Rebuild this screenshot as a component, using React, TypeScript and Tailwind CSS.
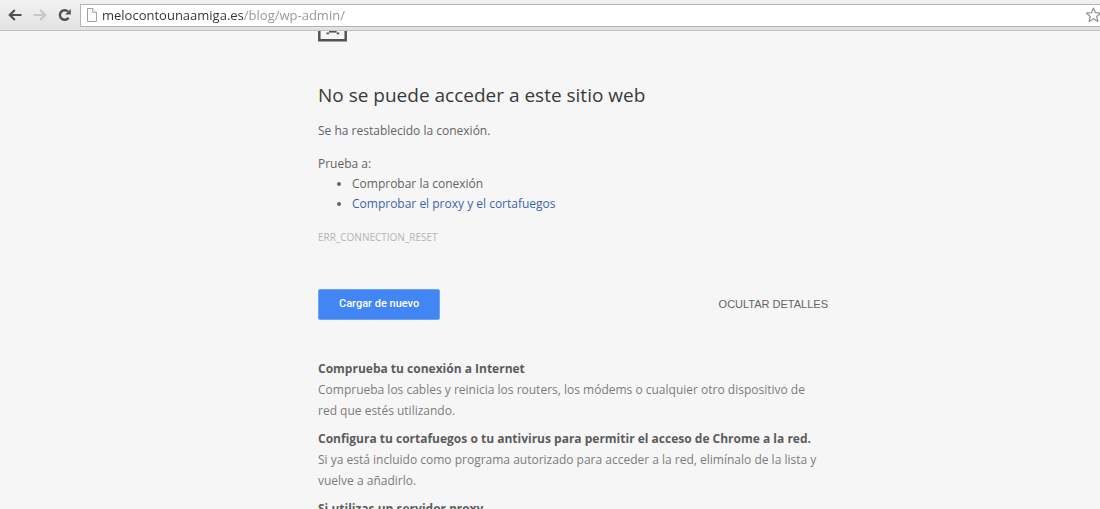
const suggestions = [
  {
    title: "Comprueba tu conexión a Internet",
    body: "Comprueba los cables y reinicia los routers, los módems o cualquier otro dispositivo de red que estés utilizando.",
  },
  {
    title: "Configura tu cortafuegos o tu antivirus para permitir el acceso de Chrome a la red.",
    body: "Si ya está incluido como programa autorizado para acceder a la red, elimínalo de la lista y vuelve a añadirlo.",
  },
  { title: "Si utilizas un servidor proxy", body: "" },
];

export default function App() {
  return (
    <div className="flex h-screen flex-col overflow-hidden bg-[#f6f6f6] font-['Open_Sans','Noto_Sans',sans-serif] text-[#646464]">
      <Toolbar />
      <main className="min-h-0 flex-1 overflow-hidden pl-[46px]">
        <div className="mx-auto max-w-[510px]">
          <SadPage />

          <h1 className="mt-10 text-[19px] leading-[26px] text-[#3a3a3a]">No se puede acceder a este sitio web</h1>
          <p className="mt-[13px] text-xs leading-5">Se ha restablecido la conexión.</p>

          <div className="mt-[13px] text-xs leading-5">
            <p>Prueba a:</p>
            <ul className="list-disc pl-[34px]">
              <li>Comprobar la conexión</li>
              <li>
                <a href="#detalles" className="text-[#3c64ad]">Comprobar el proxy y el cortafuegos</a>
              </li>
            </ul>
          </div>

          <p className="mt-[15px] text-[10px] leading-4 text-[#b4b4b4]">ERR_CONNECTION_RESET</p>

          <div className="mt-11 flex items-center justify-between text-[11px]">
            <button type="button" className="h-[31px] rounded-xs border border-[#6ea3f8] bg-[#4285f4] px-5 font-['Roboto',sans-serif] font-medium text-white">
              Cargar de nuevo
            </button>
            <button type="button" className="font-['Liberation_Sans',sans-serif] uppercase">Ocultar detalles</button>
          </div>

          <section id="detalles" className="mt-[38px] space-y-[7px] pr-2 text-xs leading-[21px]">
            {suggestions.map((s) => (
              <div key={s.title}>
                <h2 className="font-bold text-[#5c5c5c]">{s.title}</h2>
                {s.body && <p className="text-[#7c7c7c]">{s.body}</p>}
              </div>
            ))}
          </section>
        </div>
      </main>
    </div>
  );
}

function Toolbar() {
  return (
    <header className="flex h-[31px] shrink-0 items-center border-b border-[#c2c2c2] bg-linear-to-b from-[#f2f2f2] to-[#e2e2e2] pl-2">
      <button type="button" aria-label="Atrás" className="text-[#505050]">
        <Arrow />
      </button>
      <button type="button" aria-label="Adelante" className="ml-[11px] -scale-x-100 text-[#c6c6c6]">
        <Arrow />
      </button>
      <button type="button" aria-label="Volver a cargar" className="ml-[11px] text-[#505050]">
        <svg width="14" height="14" viewBox="0 0 14 14" fill="none">
          <path d="M10.6 9.8A4.8 4.8 0 1 1 10 3.5" stroke="currentColor" strokeWidth="2.4" />
          <path d="M12.8 1v5.6H7.2z" fill="currentColor" />
        </svg>
      </button>
      <div className="ml-2 flex h-[23px] flex-1 items-center border-y border-l border-[#b4b4b4] bg-white pl-[6px]">
        <svg width="10" height="14" viewBox="0 0 10 14" fill="#fbfbfb" stroke="#a0a0a0" aria-hidden="true">
          <path d="M.5.5h5.2l3.8 3.8v9.2h-9z" />
          <path d="M5.7.5v3.8h3.8" />
        </svg>
        {/* host in dark, path in grey */}
        <input
          type="text"
          aria-label="Dirección"
          defaultValue="melocontounaamiga.es/blog/wp-admin/"
          className="ml-[5px] h-5 min-w-0 flex-1 bg-linear-to-r from-[#333333] from-[141px] to-[#949494] to-[141px] bg-clip-text text-[13px] text-transparent outline-none"
        />
        <button type="button" aria-label="Añadir a marcadores" className="-mr-[2px]">
          <svg width="17" height="16" viewBox="0 0 17 16" fill="#fff" stroke="#929292" strokeWidth="1.2" strokeLinejoin="round">
            <path d="M8.5 1l2 4.7 5.2.4-4 3.4 1.2 5-4.4-2.7-4.4 2.7 1.2-5-4-3.4 5.2-.4z" />
          </svg>
        </button>
      </div>
    </header>
  );
}

function Arrow() {
  return (
    <svg width="14" height="12" viewBox="0 0 14 12" fill="none" stroke="currentColor" strokeWidth="2.2">
      <path d="M6.8 1L1.8 6l5 5M2 6h11.5" />
    </svg>
  );
}

/* Scrolled page: only the bottom of the icon shows under the toolbar */
function SadPage() {
  return (
    <svg className="-mt-6" width="29" height="35" viewBox="0 0 29 35" fill="none" stroke="#535353" aria-hidden="true">
      <path d="M1.3 1.3h18l8.4 8.4v23.5H1.3z" strokeWidth="2.5" />
      <path d="M11 24.8h7.6" strokeWidth="1.6" />
      <path d="M8.4 26.4h2.6M18.6 26.4h2.6" strokeWidth="1.8" />
    </svg>
  );
}
